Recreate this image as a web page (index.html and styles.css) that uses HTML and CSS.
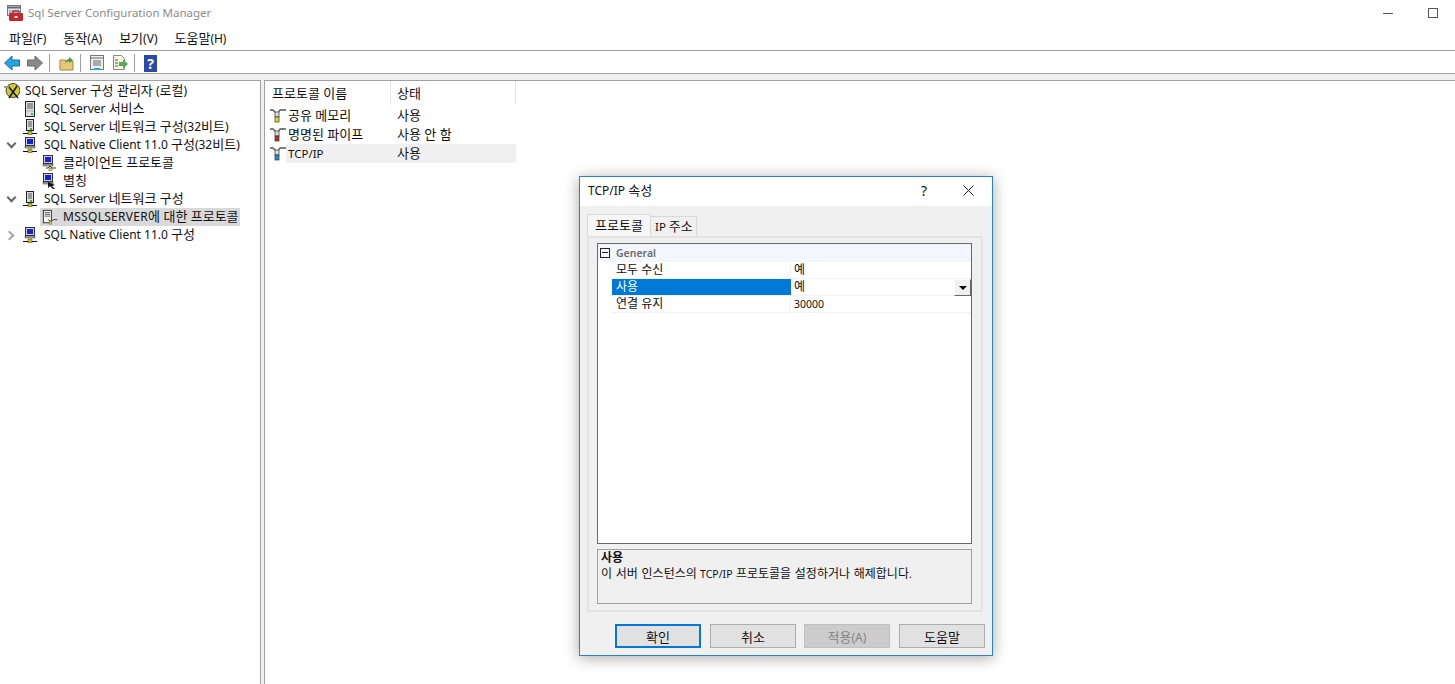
FILE: index.html
```html
<!DOCTYPE html>
<html lang="ko">
<head>
    <meta charset="UTF-8">
    <title>Sql Server Configuration Manager</title>
    <link rel="stylesheet" href="styles.css">
</head>
<body>
    <svg class="defs" width="0" height="0">
        <symbol id="i-server" viewBox="0 0 16 16">
            <rect x="3.500" y="0.500" width="9" height="15" fill="#dcdcdc" stroke="#222"/>
            <path d="M5 3h6M5 5h6M5 7h6" stroke="#555"/>
            <path d="M4 10h8" stroke="#aaa"/>
            <rect x="9" y="12" width="2" height="2" fill="#22c04c"/>
        </symbol>
        <symbol id="i-netserver" viewBox="0 0 16 16">
            <rect x="4.500" y="0.500" width="7" height="11" fill="#dcdcdc" stroke="#222"/>
            <path d="M6 3h4M6 5h4M6 7h4" stroke="#555"/>
            <rect x="8" y="9" width="2" height="2" fill="#22c04c"/>
            <path d="M1 14.500h14" stroke="#111"/>
            <rect x="6" y="12" width="4" height="4" fill="#c8b820" stroke="#333" stroke-width=".5"/>
        </symbol>
        <symbol id="i-client" viewBox="0 0 16 16">
            <rect x="3.500" y="0.500" width="9" height="8" fill="#cfcfcf" stroke="#333"/>
            <rect x="5" y="2" width="6" height="5" fill="#1a20d8"/>
            <rect x="3" y="9" width="10" height="2" fill="#aaa" stroke="#333" stroke-width=".5"/>
            <path d="M1 14.500h14" stroke="#111"/>
            <rect x="6" y="12" width="4" height="4" fill="#c8b820" stroke="#333" stroke-width=".5"/>
        </symbol>
        <symbol id="i-proto" viewBox="0 0 16 16">
            <rect x="1.500" y="0.500" width="9" height="8" fill="#cfcfcf" stroke="#333"/>
            <rect x="3" y="2" width="6" height="5" fill="#1a20d8"/>
            <rect x="1" y="9" width="10" height="2" fill="#aaa" stroke="#333" stroke-width=".5"/>
            <path d="M4 13h2l2-2 2 2h4" stroke="#333" fill="none"/>
            <rect x="7" y="13" width="3" height="3" fill="#e8d820" stroke="#555" stroke-width=".5"/>
        </symbol>
        <symbol id="i-alias" viewBox="0 0 16 16">
            <rect x="1.500" y="0.500" width="9" height="8" fill="#cfcfcf" stroke="#333"/>
            <rect x="3" y="2" width="6" height="5" fill="#1a20d8"/>
            <rect x="1" y="9" width="10" height="2" fill="#aaa" stroke="#333" stroke-width=".5"/>
            <path d="M6 9l7 3-3 1 3 3h-2l-3-3-2 2z" fill="#111"/>
        </symbol>
        <symbol id="i-srvproto" viewBox="0 0 18 16">
            <rect x="1.500" y="0.500" width="9" height="14" fill="#f4f4f4" stroke="#222"/>
            <path d="M3 3h6M3 5h6M3 7h6" stroke="#555"/>
            <path d="M7 11l3 2 3-2h4" stroke="#333" fill="none"/>
            <rect x="8" y="13" width="3" height="3" fill="#e8d820" stroke="#555" stroke-width=".5"/>
        </symbol>
        <symbol id="i-root" viewBox="0 0 16 16">
            <circle cx="9" cy="7.500" r="7" fill="#d8c828" stroke="#444"/>
            <path d="M4 3l10 12M13 3L5 15" stroke="#111" stroke-width="1.500"/>
            <path d="M0 4h5" stroke="#999" stroke-width="2"/>
        </symbol>
        <symbol id="i-pipe" viewBox="0 0 16 16">
            <path d="M0 2h3l3 3M8 5l2-3h6" stroke="#555" stroke-width="1.300" fill="none"/>
            <rect x="5" y="4" width="4" height="5" fill="#ddd" stroke="#333" stroke-width=".7"/>
            <rect x="5" y="9" width="4" height="5" fill="var(--plug)" stroke="#333" stroke-width=".7"/>
        </symbol>
        <symbol id="i-back" viewBox="0 0 16 16">
            <path d="M0.500 8l7.500-7v4h7.500v6H8v4z" fill="#29a3e0" stroke="#1a6aa8"/>
        </symbol>
        <symbol id="i-fwd" viewBox="0 0 16 16">
            <path d="M15.500 8L8 1v4H0.500v6H8v4z" fill="#8a8a8a" stroke="#666"/>
        </symbol>
    </svg>

    <header class="titlebar">
        <svg class="app-icon" width="16" height="16" viewBox="0 0 16 16">
            <rect x="0.500" y="0.500" width="13" height="10" fill="#dfe3ee" stroke="#777"/>
            <path d="M1 2.500h12" stroke="#667" stroke-width="2"/>
            <path d="M2 6h10M2 8h10" stroke="#889"/>
            <rect x="2" y="8" width="14" height="8" rx="1" fill="#c8282c"/>
            <path d="M6 8V6h6v2" fill="none" stroke="#611"/>
            <rect x="7.500" y="11" width="3" height="2" fill="#eee"/>
        </svg>
        <span class="app-title">Sql Server Configuration Manager</span>
        <div class="win-controls">
            <span class="win-min"></span>
            <span class="win-max"></span>
        </div>
    </header>

    <nav class="menubar">
        <span><span class="k">파일</span>(F)</span>
        <span><span class="k">동작</span>(A)</span>
        <span><span class="k">보기</span>(V)</span>
        <span><span class="k">도움말</span>(H)</span>
    </nav>

    <div class="toolbar">
        <svg class="tool tool-back" width="16" height="16"><use href="#i-back"/></svg>
        <svg class="tool tool-fwd" width="16" height="16"><use href="#i-fwd"/></svg>
        <span class="tool-sep sep-a"></span>
        <svg class="tool tool-folder" width="16" height="16" viewBox="0 0 16 16">
            <path d="M1 5h5l1 1h7v9H1z" fill="#e8c878" stroke="#a08840"/>
            <path d="M6 9c0-3 2-5 4-5V2l4 3-4 3V6c-2 0-3 1-4 3z" fill="#3aa83a"/>
        </svg>
        <span class="tool-sep sep-b"></span>
        <svg class="tool tool-props" width="16" height="16" viewBox="0 0 16 16">
            <rect x="1.500" y="0.500" width="13" height="14" fill="#f0f0f0" stroke="#777"/>
            <path d="M2 3h12" stroke="#aaa" stroke-width="2"/>
            <path d="M4 6h8M4 8h8M4 10h8" stroke="#666"/>
            <path d="M5 14h6" stroke="#29a3e0" stroke-width="2"/>
        </svg>
        <svg class="tool tool-export" width="16" height="16" viewBox="0 0 16 16">
            <path d="M1.500 0.500h8l3 3v11h-11z" fill="#fbf6e0" stroke="#888"/>
            <path d="M3 5h3M3 8h3M3 11h3" stroke="#555"/>
            <path d="M7 7h4V4.500L16 9l-5 4.500V11H7z" fill="#4cb050"/>
        </svg>
        <span class="tool-sep sep-c"></span>
        <span class="tool-help">?</span>
    </div>
    <div class="band"></div>

    <main class="panes">
        <section class="tree">
            <div class="tree-row root">
                <div class="node"><svg class="ico"><use href="#i-root"/></svg><span>SQL Server <span class="k">구성 관리자</span> (<span class="k">로컬</span>)</span></div>
            </div>
            <div class="tree-row">
                <span class="twisty"></span>
                <div class="node"><svg class="ico"><use href="#i-server"/></svg><span>SQL Server <span class="k">서비스</span></span></div>
            </div>
            <div class="tree-row">
                <span class="twisty"></span>
                <div class="node"><svg class="ico"><use href="#i-netserver"/></svg><span>SQL Server <span class="k">네트워크 구성</span>(32<span class="k">비트</span>)</span></div>
            </div>
            <div class="tree-row">
                <span class="twisty open"></span>
                <div class="node"><svg class="ico"><use href="#i-client"/></svg><span>SQL Native Client 11.0 <span class="k">구성</span>(32<span class="k">비트</span>)</span></div>
            </div>
            <div class="tree-row deep">
                <div class="node"><svg class="ico"><use href="#i-proto"/></svg><span class="k">클라이언트 프로토콜</span></div>
            </div>
            <div class="tree-row deep">
                <div class="node"><svg class="ico"><use href="#i-alias"/></svg><span class="k">별칭</span></div>
            </div>
            <div class="tree-row">
                <span class="twisty open"></span>
                <div class="node"><svg class="ico"><use href="#i-netserver"/></svg><span>SQL Server <span class="k">네트워크 구성</span></span></div>
            </div>
            <div class="tree-row deep">
                <div class="node selected"><svg class="ico"><use href="#i-srvproto"/></svg><span><span class="caps">MSSQLSERVER</span><span class="k">에 대한 프로토콜</span></span></div>
            </div>
            <div class="tree-row">
                <span class="twisty closed"></span>
                <div class="node"><svg class="ico"><use href="#i-client"/></svg><span>SQL Native Client 11.0 <span class="k">구성</span></span></div>
            </div>
        </section>

        <div class="splitter"></div>

        <section class="list">
            <div class="list-head">
                <span class="col-name k">프로토콜 이름</span>
                <span class="col-state k">상태</span>
            </div>
            <div class="list-row plug-yellow">
                <svg class="ico"><use href="#i-pipe"/></svg>
                <div class="list-cells"><span class="cell-name k">공유 메모리</span><span class="k">사용</span></div>
            </div>
            <div class="list-row plug-red">
                <svg class="ico"><use href="#i-pipe"/></svg>
                <div class="list-cells"><span class="cell-name k">명명된 파이프</span><span class="k">사용 안 함</span></div>
            </div>
            <div class="list-row plug-blue current">
                <svg class="ico"><use href="#i-pipe"/></svg>
                <div class="list-cells"><span class="cell-name">TCP/IP</span><span class="k">사용</span></div>
            </div>
        </section>
    </main>

    <div class="dialog">
        <div class="dlg-title">
            <span class="dlg-caption">TCP/IP <span class="k">속성</span></span>
            <span class="dlg-help">?</span>
            <svg class="dlg-close" width="11" height="11" viewBox="0 0 11 11"><path d="M0.500 0.500l10 10M10.500 0.500l-10 10" stroke="#222"/></svg>
        </div>
        <div class="dlg-body">
            <div class="tabs">
                <span class="tab active k">프로토콜</span>
                <span class="tab">IP <span class="k">주소</span></span>
            </div>
            <div class="tab-panel">
                <div class="prop-grid">
                    <div class="prop-group"><span class="expander"></span><span>General</span></div>
                    <div class="prop-row"><span class="prop-name k">모두 수신</span><span class="prop-value k">예</span></div>
                    <div class="prop-row sel"><span class="prop-name k">사용</span><span class="prop-value k">예</span><span class="drop-btn"></span></div>
                    <div class="prop-row"><span class="prop-name k">연결 유지</span><span class="prop-value">30000</span></div>
                </div>
                <div class="prop-desc">
                    <b class="k">사용</b>
                    <p><span class="k">이 서버 인스턴스의</span> TCP/IP <span class="k">프로토콜을 설정하거나 해제합니다</span>.</p>
                </div>
            </div>
            <div class="dlg-buttons">
                <button class="primary k">확인</button>
                <button class="k">취소</button>
                <button class="disabled"><span class="k">적용</span>(A)</button>
                <button class="k">도움말</button>
            </div>
        </div>
    </div>
</body>
</html>
```

FILE: styles.css
```css
/* main window */
html, body {
    height: 100%;
}
body {
    margin: 0;
    background-color: #fff;
    color: #111;
    font-family: "Noto Sans", "Noto Sans CJK KR", sans-serif;
    font-size: 12px;
    line-height: 18px;
    display: flex;
    flex-direction: column;
    overflow: hidden;
}
/* hangul runs wider than the latin text next to it */
.k {
    font-size: 13px;
}
.defs {
    position: absolute;
}
.titlebar {
    height: 26px;
    display: flex;
    align-items: center;
    padding-left: 7px;
    flex: none;
}
.app-title {
    margin-left: 5px;
    color: #8c8c8c;
    font-size: 11.5px;
}
.win-controls {
    margin-left: auto;
    display: flex;
    align-items: center;
    margin-right: 17px;
}
.win-min {
    width: 10px;
    height: 1px;
    background-color: #555;
    margin-right: 35px;
}
.win-max {
    width: 8px;
    height: 8px;
    border: 1px solid #555;
}
.menubar {
    height: 25px;
    box-sizing: border-box;
    display: flex;
    align-items: center;
    padding-left: 9px;
    gap: 17px;
    border-bottom: 1px solid #a0a0a0;
    flex: none;
}
.toolbar {
    height: 23px;
    display: flex;
    align-items: center;
    padding-left: 4px;
    padding-top: 2px;
    box-sizing: border-box;
    border-bottom: 1px solid #a0a0a0;
    flex: none;
}
.tool-fwd {
    margin-left: 7px;
}
.tool-sep {
    width: 1px;
    height: 18px;
    background-color: #a0a0a0;
}
.sep-a {
    margin: 0 9px 0 6px;
}
.sep-b {
    margin: 0 8px 0 5px;
}
.tool-export {
    margin-left: 7px;
}
.sep-c {
    margin: 0 9px 0 6px;
}
.tool-help {
    width: 13px;
    height: 17px;
    background-color: #2a4aa8;
    color: #fff;
    font-weight: bold;
    font-size: 14px;
    line-height: 17px;
    text-align: center;
}
.band {
    height: 6px;
    background-color: #f0f0f0;
    flex: none;
}
.panes {
    flex: 1;
    display: flex;
    min-height: 0;
}

/* left tree */
.tree {
    width: 260px;
    flex: none;
    padding-top: 1px;
    border-top: 1px solid #a0a0a0;
    box-sizing: border-box;
}
.tree-row {
    height: 18px;
    display: flex;
    align-items: center;
    padding-left: 4px;
    white-space: nowrap;
}
.tree-row.deep {
    padding-left: 40px;
}
.twisty {
    width: 18px;
    height: 18px;
    flex: none;
    position: relative;
}
.twisty.open::before,
.twisty.closed::before {
    content: "";
    position: absolute;
    width: 5px;
    height: 5px;
    border-right: 2px solid #666;
    border-bottom: 2px solid #666;
}
.twisty.open::before {
    left: 4px;
    top: 4px;
    transform: rotate(45deg);
}
.twisty.closed::before {
    left: 2px;
    top: 6px;
    border-color: #a6a6a6;
    transform: rotate(-45deg);
}
.node {
    display: flex;
    align-items: center;
    height: 18px;
    gap: 6px;
}
.node > span {
    margin-top: -2px;
}
.root .node,
.deep .node {
    gap: 5px;
}
.deep .node {
    padding-left: 2px;
}
.node.selected {
    background-color: #d9d9d9;
    width: 200px;
    box-sizing: border-box;
}
.caps {
    letter-spacing: 0.3px;
}
.ico {
    width: 16px;
    height: 16px;
    flex: none;
}
.splitter {
    width: 5px;
    flex: none;
    background-color: #f0f0f0;
    border-left: 1px solid #a0a0a0;
    border-right: 1px solid #a0a0a0;
    box-sizing: border-box;
}

/* right list */
.list {
    flex: 1;
    border-top: 1px solid #a0a0a0;
    font-size: 11.5px;
}
.list-head {
    height: 25px;
    display: flex;
}
.col-name,
.col-state {
    height: 24px;
    line-height: 24px;
    box-sizing: border-box;
    border-right: 1px solid #e5e5e5;
}
.col-name {
    width: 126px;
    padding-left: 7px;
}
.col-state {
    width: 125px;
    padding-left: 6px;
}
.list-row {
    display: flex;
    align-items: center;
    height: 19px;
    width: 246px;
    padding-left: 5px;
}
.plug-yellow {
    --plug: #e8d820;
}
.plug-red {
    --plug: #c8282c;
}
.plug-blue {
    --plug: #2a8ad8;
}
.list-cells {
    display: flex;
    flex: 1;
    height: 19px;
    line-height: 19px;
    padding-left: 2px;
}
.list-row.current .list-cells {
    background-color: #f0f0f0;
}
.cell-name {
    width: 109px;
}

/* tcp/ip properties dialog */
.dialog {
    position: absolute;
    left: 579px;
    top: 176px;
    width: 414px;
    height: 480px;
    box-sizing: border-box;
    border: 1px solid #2b82c9;
    background-color: #f0f0f0;
    box-shadow: 0 2px 14px rgba(0, 0, 0, 0.35);
    display: flex;
    flex-direction: column;
}
.dlg-title {
    height: 29px;
    box-sizing: border-box;
    padding: 0 0 2px 8px;
    background-color: #fff;
    display: flex;
    align-items: center;
    flex: none;
}
.dlg-help {
    margin-left: auto;
    margin-right: 36px;
    font-size: 14px;
}
.dlg-close {
    margin-right: 18px;
}
.dlg-body {
    flex: 1;
    padding: 8px 9px 7px 7px;
    display: flex;
    flex-direction: column;
}
.tabs {
    display: flex;
    align-items: flex-end;
    height: 22px;
    flex: none;
    position: relative;
    z-index: 1;
}
.tab {
    height: 19px;
    line-height: 19px;
    padding: 0 3px 0 4px;
    background-color: #f0f0f0;
    border: 1px solid #d9d9d9;
    border-bottom: none;
    border-left: none;
    font-size: 11.5px;
}
.tab.active {
    height: 22px;
    width: 64px;
    box-sizing: border-box;
    padding: 0 0 0 7px;
    line-height: 20px;
    background-color: #f6f6f6;
    border-left: 1px solid #d9d9d9;
    font-size: 13px;
}
.tab-panel {
    height: 376px;
    flex: none;
    box-sizing: border-box;
    border: 2px solid #e3e3e3;
    padding: 5px 9px 6px 8px;
    display: flex;
    flex-direction: column;
    gap: 5px;
}
.prop-grid {
    height: 301px;
    flex: none;
    box-sizing: border-box;
    border: 1px solid #696969;
    background-color: #fff;
    font-size: 10.5px;
}
.prop-group {
    height: 18px;
    background-color: #f3f6fb;
    display: flex;
    align-items: center;
    color: #6d6d6d;
    font-weight: 600;
}
.expander {
    width: 8px;
    height: 8px;
    border: 1px solid #222;
    margin: 0 6px 0 2px;
    flex: none;
    position: relative;
}
.expander::after {
    content: "";
    position: absolute;
    left: 1px;
    right: 1px;
    top: 3px;
    height: 1px;
    background-color: #222;
}
.prop-row {
    height: 17px;
    margin-left: 14px;
    display: flex;
    line-height: 16px;
    position: relative;
    border-bottom: 1px solid #f0f3f9;
    box-sizing: border-box;
}
.prop-name {
    width: 179px;
    padding-left: 4px;
    box-sizing: border-box;
    border-right: 1px solid #f0f3f9;
}
.prop-value {
    padding-left: 3px;
}
.prop-grid .k,
.prop-desc .k {
    font-size: 12px;
}
.prop-row.sel .prop-name {
    background-color: #0078d7;
    color: #fff;
    border-right: none;
}
.drop-btn {
    position: absolute;
    right: 0;
    top: 0;
    width: 17px;
    height: 17px;
    box-sizing: border-box;
    background-color: #f0f0f0;
    border: 1px solid #fff;
    border-right-color: #696969;
    border-bottom-color: #696969;
}
.drop-btn::after {
    content: "";
    position: absolute;
    left: 4px;
    top: 6px;
    border-left: 4px solid transparent;
    border-right: 4px solid transparent;
    border-top: 4px solid #000;
}
.prop-desc {
    height: 55px;
    flex: none;
    box-sizing: border-box;
    border: 1px solid #a0a0a0;
    padding: 0 3px;
    font-size: 10.5px;
    line-height: 15px;
}
.prop-desc b {
    display: block;
}
.prop-desc p {
    margin: 1px 0 0;
    white-space: nowrap;
    word-spacing: 0.6px;
}
.dlg-buttons {
    display: flex;
    gap: 9px;
    margin-top: 12px;
    padding-left: 28px;
    flex: none;
}
button {
    width: 86px;
    height: 24px;
    flex: none;
    padding: 0;
    background-color: #e1e1e1;
    border: 1px solid #adadad;
    font-family: inherit;
    font-size: 12px;
    color: #111;
}
button.k {
    font-size: 13px;
}
button.primary {
    border: 2px solid #0078d7;
}
button.disabled {
    margin-left: -1px;
    background-color: #cccccc;
    border-color: #bfbfbf;
    color: #838383;
}
```
